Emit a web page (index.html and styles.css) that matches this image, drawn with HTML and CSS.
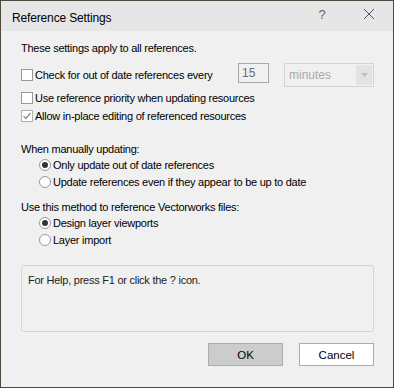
FILE: index.html
```html
<!DOCTYPE html>
<html lang="en">
<head>
  <meta charset="UTF-8">
  <title>Reference Settings</title>
  <link rel="stylesheet" href="styles.css">
</head>
<body>
  <div class="window">
    <div class="titlebar">
      <span class="title">Reference Settings</span>
      <span class="help-btn">?</span>
      <span class="close-btn">
        <svg width="12" height="12" viewBox="0 0 12 12"><path d="M1 1 L11 11 M11 1 L1 11" stroke="#555" stroke-width="1"/></svg>
      </span>
    </div>

    <div class="content">
      <div class="line intro">These settings apply to all references.</div>

      <div class="row first">
        <label class="option">
          <span class="check"></span>
          <span>Check for out of date references every</span>
        </label>
        <span class="num-box">15</span>
        <span class="select">
          <span class="select-text">minutes</span>
          <span class="select-arrow">
            <svg width="7" height="4" viewBox="0 0 7 4"><path d="M0 0 L7 0 L3.5 4 Z" fill="#bdbdbd"/></svg>
          </span>
        </span>
      </div>

      <label class="option line row2">
        <span class="check"></span>
        <span>Use reference priority when updating resources</span>
      </label>
      <label class="option line row3">
        <span class="check checked">
          <svg width="10" height="10" viewBox="0 0 10 10"><path d="M1.5 5 L4 7.5 L8.5 2" fill="none" stroke="#8a8a8a" stroke-width="1.2"/></svg>
        </span>
        <span>Allow in-place editing of referenced resources</span>
      </label>

      <div class="line heading">When manually updating:</div>
      <div class="group">
        <label class="option line">
          <span class="radio on"></span>
          <span>Only update out of date references</span>
        </label>
        <label class="option line">
          <span class="radio"></span>
          <span>Update references even if they appear to be up to date</span>
        </label>
      </div>

      <div class="line heading second">Use this method to reference Vectorworks files:</div>
      <div class="group">
        <label class="option line">
          <span class="radio on"></span>
          <span>Design layer viewports</span>
        </label>
        <label class="option line">
          <span class="radio"></span>
          <span>Layer import</span>
        </label>
      </div>

      <div class="help-box">For Help, press F1 or click the ? icon.</div>

      <div class="buttons">
        <span class="button ok">OK</span>
        <span class="button">Cancel</span>
      </div>
    </div>
  </div>
</body>
</html>
```

FILE: styles.css
```css
* {
  margin: 0;
  padding: 0;
  box-sizing: border-box;
}
body {
  width: 394px;
  height: 388px;
  background-color: #f0f0f0;
  font-family: "Liberation Sans", Arial, sans-serif;
  font-size: 11px;
  letter-spacing: -0.25px;
  color: #000;
}
.window {
  width: 394px;
  height: 388px;
  border: 1px solid #4b4b3d;
  background-color: #f0f0f0;
  display: flex;
  flex-direction: column;
}
.titlebar {
  height: 30px;
  background-color: #e6e6e6;
  display: flex;
  align-items: center;
  padding-left: 11px;
}
.title {
  font-size: 12px;
  letter-spacing: -0.15px;
  flex: 1;
  padding-top: 4px;
}
.help-btn {
  width: 20px;
  font-size: 13px;
  color: #666;
  text-align: center;
  margin-right: 31px;
  padding-bottom: 3px;
}
.close-btn {
  width: 12px;
  height: 12px;
  margin-right: 18px;
  margin-bottom: 4px;
  display: flex;
}
.content {
  padding: 0 19px 0 20px;
  display: flex;
  flex-direction: column;
}
.line {
  height: 16px;
  display: flex;
  align-items: center;
}
.intro {
  margin-top: 9px;
}
.option {
  display: flex;
  align-items: center;
  gap: 2px;
}
.row {
  display: flex;
  align-items: center;
  height: 24px;
  margin-top: 7px;
}
.row .option {
  width: 217px;
}
.check {
  width: 12px;
  height: 12px;
  border: 1px solid #999;
  background-color: #fff;
  display: flex;
  align-items: center;
  justify-content: center;
}
.check.checked {
  border-color: #b0b0b0;
}
.num-box {
  align-self: flex-start;
  width: 31px;
  height: 20px;
  border: 1px solid #a8a8a8;
  background-color: #f0f0f0;
  color: #6d6d6d;
  font-size: 12px;
  letter-spacing: 0;
  padding: 2px 0 0 3px;
}
.select {
  width: 90px;
  height: 24px;
  margin-left: 15px;
  border: 1px solid #d4d4d4;
  display: flex;
  align-items: center;
  padding: 1px;
}
.select-text {
  flex: 1;
  color: #aaa;
  font-size: 12px;
  letter-spacing: 0;
  padding-left: 3px;
}
.select-arrow {
  width: 16px;
  height: 20px;
  background-color: #e3e3e3;
  display: flex;
  align-items: center;
  justify-content: center;
}
.row2 {
  margin-top: 3px;
}
.row3 {
  margin-top: 2px;
}
.heading {
  margin-top: 17px;
}
.heading.second {
  margin-top: 9px;
}
.group {
  padding-left: 18px;
  display: flex;
  flex-direction: column;
  gap: 1px;
}
.radio {
  width: 12px;
  height: 12px;
  border: 1px solid #999;
  border-radius: 50%;
  background-color: #fff;
  display: flex;
  align-items: center;
  justify-content: center;
}
.radio.on::after {
  content: "";
  width: 6px;
  height: 6px;
  border-radius: 50%;
  background-color: #333;
}
.help-box {
  margin-top: 17px;
  height: 67px;
  border: 1px solid #d6d6d6;
  border-radius: 3px;
  padding: 8px 6px;
  color: #222;
}
.buttons {
  display: flex;
  justify-content: flex-end;
  gap: 16px;
  margin-top: 11px;
}
.button {
  width: 75px;
  height: 23px;
  border: 1px solid #adadad;
  background-color: #fff;
  display: flex;
  align-items: center;
  justify-content: center;
  font-size: 11.5px;
  letter-spacing: 0;
}
.button.ok {
  background-color: #cccccc;
}
```
